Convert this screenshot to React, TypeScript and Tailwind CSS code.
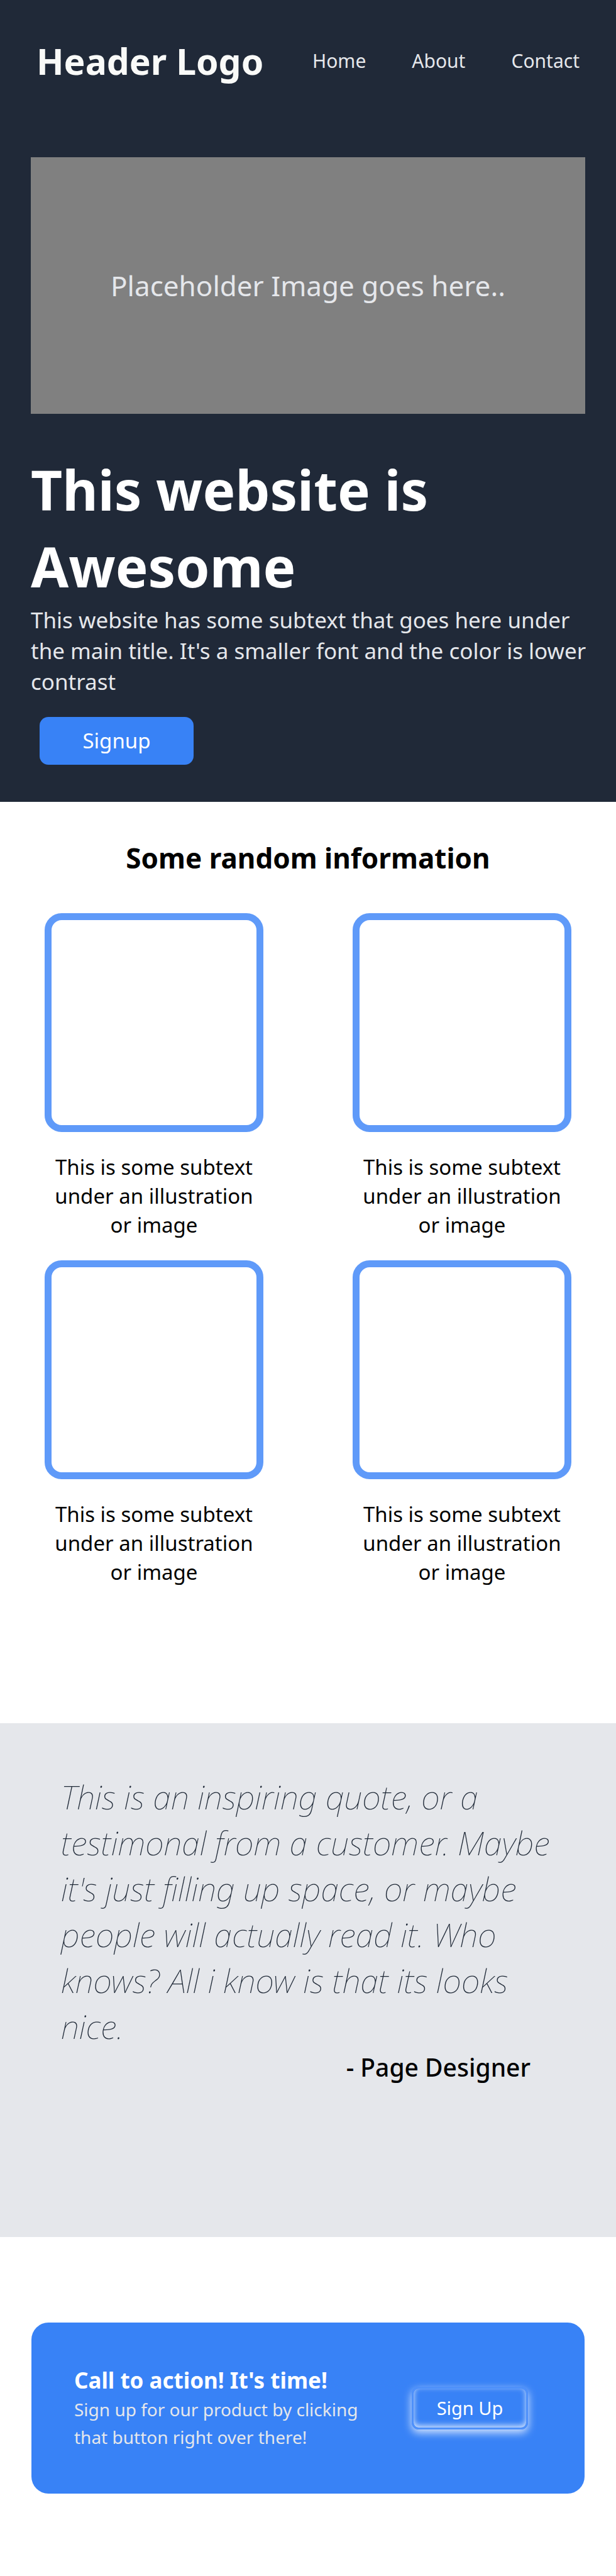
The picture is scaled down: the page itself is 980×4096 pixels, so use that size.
const links = ["Home", "About", "Contact"];
const cards = [1, 2, 3, 4];

function Header() {
  return (
    <header className="flex items-center justify-between py-[58px] pr-[58px] pl-[58px]">
      <a href="#" className="text-[57px] leading-[78px] font-bold text-[#f9faf8]">
        Header Logo
      </a>
      <nav>
        <ul className="flex gap-[73px]">
          {links.map((link) => (
            <li key={link}>
              <a href="#" className="text-[30px] leading-[42px] text-gray-200">
                {link}
              </a>
            </li>
          ))}
        </ul>
      </nav>
    </header>
  );
}

function Hero() {
  return (
    <section className="px-[49px] pt-14 pb-[59px]">
      <div className="flex h-[408px] items-center justify-center bg-[#808080] text-[44px] text-gray-200">
        Placeholder Image goes here..
      </div>
      <h1 className="mt-[59px] text-[87px] leading-[122px] font-bold text-white">
        This website is Awesome
      </h1>
      <p className="-mr-2 text-[35px] leading-[49px] text-gray-200">
        This website has some subtext that goes here under the main title. It's a smaller font and
        the color is lower contrast
      </p>
      <button className="mt-8 ml-[14px] h-[76px] w-[245px] rounded-[14px] bg-[#3882f6] text-[33px] text-white">
        Signup
      </button>
    </section>
  );
}

function Information() {
  return (
    <section className="pt-[59px] pb-[217px] text-black">
      <h2 className="text-center text-[44px] leading-[60px] font-bold">Some random information</h2>
      <div className="mt-[58px] grid grid-cols-2 justify-items-center gap-y-[33px]">
        {cards.map((card) => (
          <figure key={card} className="flex w-[348px] flex-col gap-[33px]">
            <div className="h-[348px] rounded-[27px] border-[11px] border-[#5f9af9]" />
            <figcaption className="px-3 text-center text-[33px] leading-[46px]">
              This is some subtext under an illustration or image
            </figcaption>
          </figure>
        ))}
      </div>
    </section>
  );
}

function Quote() {
  return (
    <section className="bg-gray-200 px-[97px] pt-20 pb-[241px]">
      <blockquote className="text-[52px] leading-[73px] font-thin text-[#1f2937] italic">
        This is an inspiring quote, or a testimonal from a customer. Maybe it's just filling up
        space, or maybe people will actually read it. Who knows? All i know is that its looks nice.
      </blockquote>
      <p className="pr-[39px] text-right text-[39px] leading-[58px] font-medium text-black">
        - Page Designer
      </p>
    </section>
  );
}

function CallToAction() {
  return (
    <section className="px-[50px] pt-[136px] pb-[131px]">
      <div className="flex h-[272px] items-center justify-between rounded-[27px] bg-[#3882f6] pr-[90px] pl-[68px]">
        <div className="w-[480px]">
          <h2 className="text-[35px] leading-[48px] font-bold text-white">
            Call to action! It's time!
          </h2>
          <p className="text-[28px] leading-[44px] text-gray-200">
            Sign up for our product by clicking that button right over there!
          </p>
        </div>
        <button className="h-[68px] w-[185px] rounded-[11px] border-[3px] border-[#4f91fa] text-[29px] text-white shadow-[0_5px_14px_rgba(255,255,255,0.8),inset_0_-3px_10px_rgba(255,255,255,0.8)]">
          Sign Up
        </button>
      </div>
    </section>
  );
}

export default function App() {
  return (
    <div className="min-h-screen bg-white font-['Noto_Sans',sans-serif]">
      <div className="bg-[#202938]">
        <Header />
        <Hero />
      </div>
      <main>
        <Information />
        <Quote />
        <CallToAction />
      </main>
    </div>
  );
}
